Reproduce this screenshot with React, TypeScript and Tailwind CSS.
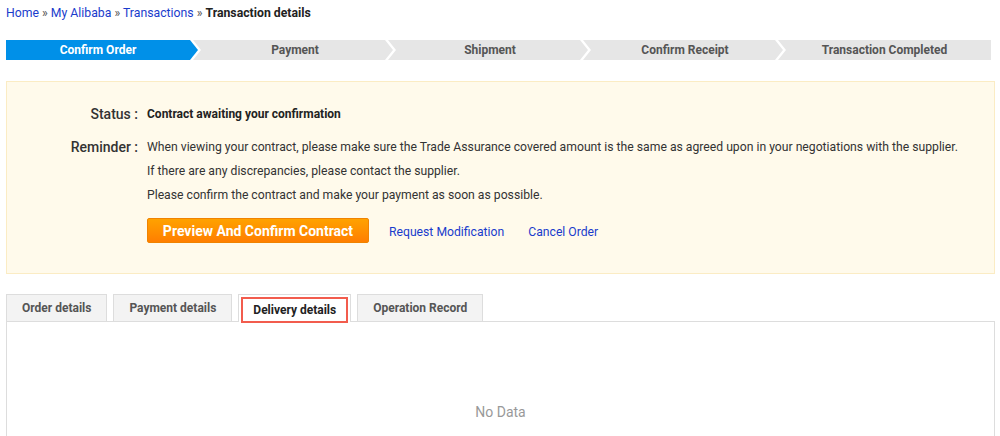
import React from 'react';

const steps = ['Confirm Order', 'Payment', 'Shipment', 'Confirm Receipt', 'Transaction Completed'];
const tabs = ['Order details', 'Payment details', 'Delivery details', 'Operation Record'];

const App = () => {
  return (
    <div className="min-h-screen bg-white text-[#333] font-['Roboto',sans-serif] px-[6px] pt-[5px]">
      <div className="text-[12.25px] leading-[16px]">
        <a className="text-[#1a3ccc]">Home</a>
        <span className="text-[#555]"> » </span>
        <a className="text-[#1a3ccc]">My Alibaba</a>
        <span className="text-[#555]"> » </span>
        <a className="text-[#1a3ccc]">Transactions</a>
        <span className="text-[#555]"> » </span>
        <span className="font-bold text-[#222]">Transaction details</span>
      </div>

      <div className="flex mt-[19px] h-[20px] w-[985px]">
        {steps.map((s, i) => {
          const first = i === 0;
          const last = i === steps.length - 1;
          const shape = first
            ? 'w-[192px] pr-[8px] [clip-path:polygon(0_0,calc(100%-8px)_0,100%_50%,calc(100%-8px)_100%,0_100%)]'
            : last
            ? 'flex-1 -ml-[5px] pl-[8px] pr-[8px] [clip-path:polygon(0_0,100%_0,100%_100%,0_100%,8px_50%)]'
            : 'w-[200px] -ml-[5px] pl-[10px] pr-[6px] [clip-path:polygon(0_0,calc(100%-8px)_0,100%_50%,calc(100%-8px)_100%,0_100%,8px_50%)]';
          return (
            <div
              key={s}
              className={`flex items-center justify-center text-[12px] font-bold ${shape} ${
                first ? 'bg-[#0090e8] text-white' : 'bg-[#e6e6e6] text-[#555]'
              }`}
            >
              {s}
            </div>
          );
        })}
      </div>

      <div className="mt-[21px] w-[989px] h-[193px] bg-[#fffaeb] border border-[#fbecc4] pt-[22px]">
        <div className="flex items-center h-[20px]">
          <div className="w-[131px] text-right text-[14px] font-medium text-[#333]">Status :</div>
          <div className="pl-[9px] text-[12px] font-bold text-[#222]">Contract awaiting your confirmation</div>
        </div>
        <div className="flex mt-[13px]">
          <div className="w-[131px] text-right text-[14px] font-medium text-[#333] leading-[20px]">Reminder :</div>
          <div className="pl-[9px] text-[12.2px] leading-[24px] text-[#333] -mt-[2px]">
            <div>
              When viewing your contract, please make sure the Trade Assurance covered amount is the same as agreed upon in your negotiations with the supplier.
            </div>
            <div>If there are any discrepancies, please contact the supplier.</div>
            <div>Please confirm the contract and make your payment as soon as possible.</div>
            <div className="flex items-center mt-[10px]">
              <button className="h-[25px] w-[222px] rounded-[2px] border border-[#f08300] bg-gradient-to-b from-[#ffa200] to-[#ff7e00] text-white text-[14px] font-bold leading-none">
                Preview And Confirm Contract
              </button>
              <a className="ml-[20px] text-[#1a3ccc] text-[12.2px] mt-[3px]">Request Modification</a>
              <a className="ml-[24px] text-[#1a3ccc] text-[12.2px] mt-[3px]">Cancel Order</a>
            </div>
          </div>
        </div>
      </div>

      <div className="mt-[21px] w-[989px]">
        <div className="flex items-end h-[27px] border-b border-[#ddd] gap-[6px]">
          {tabs.map((t, i) => {
            const active = i === 2;
            return active ? (
              <div key={t} className="h-[28px] -mb-px px-[2px] pt-[2px] border border-b-0 border-[#ddd] bg-white">
                <div className="h-[26px] px-[10px] border-2 border-[#f25c4d] flex items-center text-[12px] font-bold text-[#222]">
                  {t}
                </div>
              </div>
            ) : (
              <div
                key={t}
                className="h-[27px] px-[15px] border border-b-0 border-[#ddd] bg-[#f3f3f3] flex items-center text-[12px] font-bold text-[#555]"
              >
                {t}
              </div>
            );
          })}
        </div>
        <div className="h-[120px] border-x border-[#ddd] flex justify-center pt-[80px]">
          <span className="text-[14px] text-[#999]">No Data</span>
        </div>
      </div>
    </div>
  );
};

export default App;
